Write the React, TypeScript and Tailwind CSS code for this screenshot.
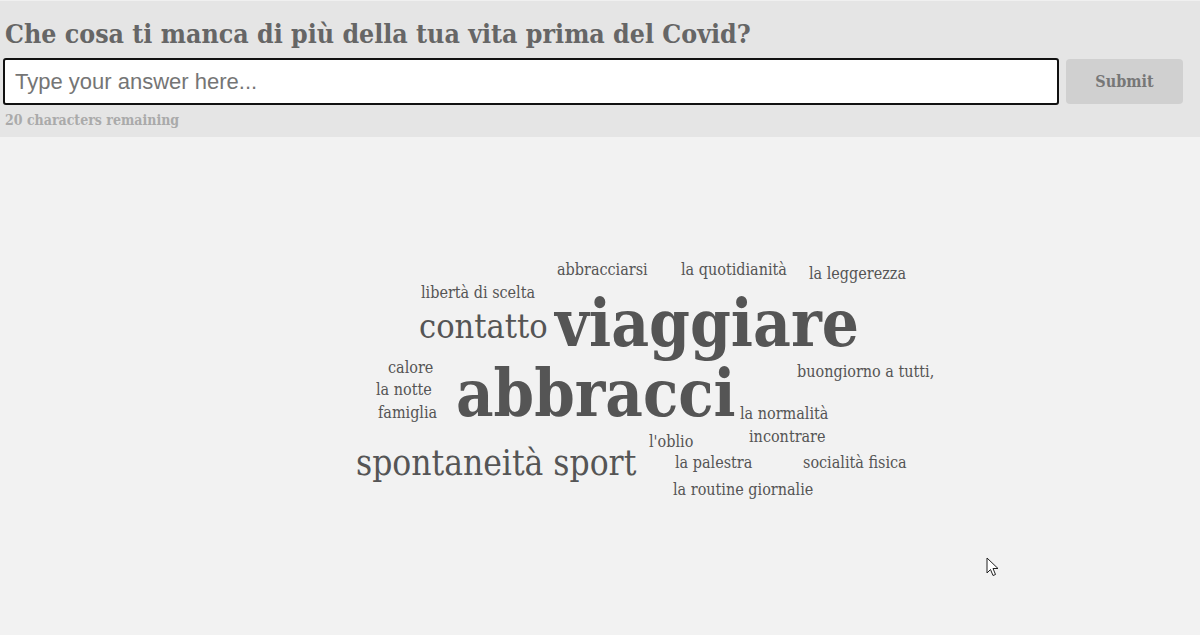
const words = [
  { text: 'abbracciarsi', cls: 'left-[557px] top-[125px] text-[16px]' },
  { text: 'la quotidianità', cls: 'left-[681px] top-[125px] text-[16px]' },
  { text: 'la leggerezza', cls: 'left-[809px] top-[129px] text-[16px]' },
  { text: 'libertà di scelta', cls: 'left-[421px] top-[148px] text-[16px]' },
  { text: 'contatto', cls: 'left-[419px] top-[172px] text-[34px]' },
  { text: 'viaggiare', cls: 'left-[555px] top-[154px] text-[65px] font-bold' },
  { text: 'calore', cls: 'left-[388px] top-[223px] text-[16px]' },
  { text: 'la notte', cls: 'left-[376px] top-[245px] text-[16px]' },
  { text: 'famiglia', cls: 'left-[378px] top-[268px] text-[16px]' },
  { text: 'abbracci', cls: 'left-[456px] top-[224px] text-[64.5px] font-bold' },
  { text: 'buongiorno a tutti,', cls: 'left-[797px] top-[227px] text-[16px]' },
  { text: 'la normalità', cls: 'left-[740px] top-[269px] text-[16px]' },
  { text: 'incontrare', cls: 'left-[749px] top-[292px] text-[16px]' },
  { text: "l'oblio", cls: 'left-[649px] top-[297px] text-[16px]' },
  { text: 'spontaneità sport', cls: 'left-[356px] top-[309px] text-[35px]' },
  { text: 'la palestra', cls: 'left-[675px] top-[318px] text-[16px]' },
  { text: 'socialità fisica', cls: 'left-[803px] top-[318px] text-[16px]' },
  { text: 'la routine giornalie', cls: 'left-[673px] top-[345px] text-[16px]' },
]

const serif = "font-['DejaVu_Serif_Condensed','DejaVu_Serif',serif]"

export default function App() {
  return (
    <div className={`w-[1200px] h-[635px] overflow-hidden bg-[#f2f2f2] ${serif}`}>
      <div className="h-[137px] bg-[#e5e5e5] border-t border-[#f0f0f0] px-[3px] pt-[16px]">
        <h1 className="px-[2px] text-[26.5px] leading-[34px] font-bold text-[#666]">
          Che cosa ti manca di più della tua vita prima del Covid?
        </h1>
        <div className="flex items-center gap-[7px] mt-[7px] pr-[14px]">
          <input
            type="text"
            placeholder="Type your answer here..."
            className="flex-1 h-[47px] rounded-[3px] border-2 border-[#111] bg-white px-[10px] font-['Liberation_Sans',Arial,sans-serif] text-[22px] text-[#333] placeholder:text-[#757575] outline-none"
          />
          <button
            type="button"
            className="w-[117px] h-[45px] rounded-[4px] bg-[#d0d0d0] text-[16px] font-bold text-[#777]"
          >
            Submit
          </button>
        </div>
        <p className="px-[2px] mt-[6px] text-[14px] leading-[18px] font-bold text-[#aaa]">
          20 characters remaining
        </p>
      </div>

      <div className="relative h-[498px]">
        {words.map(w => (
          <span
            key={w.text}
            className={`absolute whitespace-nowrap leading-none text-[#555] ${w.cls}`}
          >
            {w.text}
          </span>
        ))}
        <svg className="absolute left-[986px] top-[420px]" width="13" height="20" viewBox="0 0 13 20">
          <path d="M1 1 L1 16 L4.5 12.5 L7 18.5 L9.5 17.5 L7 11.5 L12 11.5 Z" fill="#fff" stroke="#222" strokeWidth="1" strokeLinejoin="round" />
        </svg>
      </div>
    </div>
  )
}
